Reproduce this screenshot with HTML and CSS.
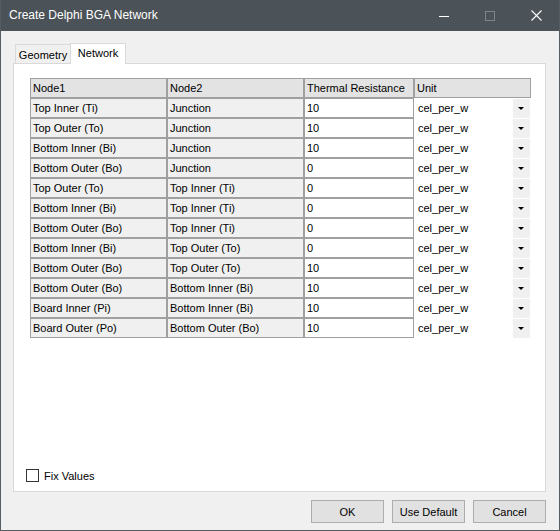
FILE: index.html
```html
<!DOCTYPE html>
<html>
<head>
<meta charset="utf-8">
<link rel="stylesheet" href="styles.css">
</head>
<body>
<div class="window">
  <div class="titlebar">
    <span class="title">Create Delphi BGA Network</span>
    <span class="ctl"><svg width="10" height="10" viewBox="0 0 10 10"><line x1="0" y1="5.5" x2="10" y2="5.5" stroke="#ffffff" stroke-width="1"/></svg></span>
    <span class="ctl"><svg width="10" height="10" viewBox="0 0 10 10"><rect x="0.5" y="0.5" width="9" height="9" fill="none" stroke="#80858a" stroke-width="1"/></svg></span>
    <span class="ctl"><svg width="11" height="11" viewBox="0 0 11 11"><path d="M0.5 0.5 L10.5 10.5 M10.5 0.5 L0.5 10.5" stroke="#ffffff" stroke-width="1.1" fill="none"/></svg></span>
  </div>
  <div class="client">
    <div class="tabs">
      <div class="tab">Geometry</div>
      <div class="tab active">Network</div>
    </div>
    <div class="panel">
      <div class="grid">
        <div class="cell head">Node1</div>
        <div class="cell head">Node2</div>
        <div class="cell head">Thermal Resistance</div>
        <div class="cell head">Unit</div>

        <div class="cell ro">Top Inner (Ti)</div><div class="cell ro">Junction</div><div class="cell ed">10</div><div class="cell combo"><span class="val">cel_per_w</span><span class="drop"><span class="arrow"></span></span></div>
        <div class="cell ro">Top Outer (To)</div><div class="cell ro">Junction</div><div class="cell ed">10</div><div class="cell combo"><span class="val">cel_per_w</span><span class="drop"><span class="arrow"></span></span></div>
        <div class="cell ro">Bottom Inner (Bi)</div><div class="cell ro">Junction</div><div class="cell ed">10</div><div class="cell combo"><span class="val">cel_per_w</span><span class="drop"><span class="arrow"></span></span></div>
        <div class="cell ro">Bottom Outer (Bo)</div><div class="cell ro">Junction</div><div class="cell ed">0</div><div class="cell combo"><span class="val">cel_per_w</span><span class="drop"><span class="arrow"></span></span></div>
        <div class="cell ro">Top Outer (To)</div><div class="cell ro">Top Inner (Ti)</div><div class="cell ed">0</div><div class="cell combo"><span class="val">cel_per_w</span><span class="drop"><span class="arrow"></span></span></div>
        <div class="cell ro">Bottom Inner (Bi)</div><div class="cell ro">Top Inner (Ti)</div><div class="cell ed">0</div><div class="cell combo"><span class="val">cel_per_w</span><span class="drop"><span class="arrow"></span></span></div>
        <div class="cell ro">Bottom Outer (Bo)</div><div class="cell ro">Top Inner (Ti)</div><div class="cell ed">0</div><div class="cell combo"><span class="val">cel_per_w</span><span class="drop"><span class="arrow"></span></span></div>
        <div class="cell ro">Bottom Inner (Bi)</div><div class="cell ro">Top Outer (To)</div><div class="cell ed">0</div><div class="cell combo"><span class="val">cel_per_w</span><span class="drop"><span class="arrow"></span></span></div>
        <div class="cell ro">Bottom Outer (Bo)</div><div class="cell ro">Top Outer (To)</div><div class="cell ed">10</div><div class="cell combo"><span class="val">cel_per_w</span><span class="drop"><span class="arrow"></span></span></div>
        <div class="cell ro">Bottom Outer (Bo)</div><div class="cell ro">Bottom Inner (Bi)</div><div class="cell ed">10</div><div class="cell combo"><span class="val">cel_per_w</span><span class="drop"><span class="arrow"></span></span></div>
        <div class="cell ro">Board Inner (Pi)</div><div class="cell ro">Bottom Inner (Bi)</div><div class="cell ed">10</div><div class="cell combo"><span class="val">cel_per_w</span><span class="drop"><span class="arrow"></span></span></div>
        <div class="cell ro">Board Outer (Po)</div><div class="cell ro">Bottom Outer (Bo)</div><div class="cell ed">10</div><div class="cell combo"><span class="val">cel_per_w</span><span class="drop"><span class="arrow"></span></span></div>
      </div>
      <label class="check"><span class="box"></span><span>Fix Values</span></label>
    </div>
    <div class="buttons">
      <div class="btn">OK</div>
      <div class="btn">Use Default</div>
      <div class="btn">Cancel</div>
    </div>
  </div>
</div>
</body>
</html>
```
FILE: styles.css
```css
html, body {
  margin: 0;
  padding: 0;
  background: #f0f0f0;
}
body {
  font-family: "Liberation Sans", Arial, sans-serif;
  font-size: 11px;
  color: #000;
}
.window {
  width: 560px;
  height: 531px;
  box-sizing: border-box;
  border: 1px solid #555c62;
  border-top: none;
  background: #f0f0f0;
  display: flex;
  flex-direction: column;
}
.titlebar {
  height: 31px;
  background: #4b5258;
  display: flex;
  align-items: center;
  color: #ffffff;
}
.title {
  flex: 1;
  padding-left: 8px;
  font-size: 12px;
  padding-bottom: 1px;
}
.ctl {
  width: 46px;
  height: 31px;
  display: flex;
  align-items: center;
  justify-content: center;
}
.ctl svg {
  display: block;
}
.client {
  flex: 1;
  display: flex;
  flex-direction: column;
}
.tabs {
  display: flex;
  align-items: flex-start;
  height: 21px;
  margin: 12px 0 -1px 14px;
  position: relative;
  z-index: 1;
}
.tab {
  box-sizing: border-box;
  width: 56px;
  height: 19px;
  margin-top: 1px;
  border: 1px solid #d9d9d9;
  border-bottom: none;
  background: #f0f0f0;
  text-align: center;
  padding-top: 3px;
  line-height: 14px;
}
.tab.active {
  height: 21px;
  margin-top: 0;
  margin-left: -1px;
  background: #ffffff;
  padding-top: 2px;
}
.panel {
  box-sizing: border-box;
  width: 533px;
  height: 429px;
  margin-left: 12px;
  border: 1px solid #d9d9d9;
  background: #ffffff;
  padding: 14px 0 0 12px;
  display: flex;
  flex-direction: column;
}
.grid {
  display: grid;
  grid-template-columns: 137px 137px 110px 117px;
  grid-auto-rows: 20px;
  margin-left: 4px;
  width: 501px;
}
.cell {
  box-sizing: border-box;
  height: 20px;
  border: 1px solid #a0a0a0;
  padding-left: 2px;
  line-height: 18px;
  white-space: nowrap;
  overflow: hidden;
}
.head {
  background: #e3e3e3;
}
.ro {
  background: #f0f0f0;
}
.ed {
  background: #ffffff;
}
.combo {
  border-color: transparent;
  background: #ffffff;
  padding-left: 3px;
  display: flex;
  overflow: visible;
}
.val {
  flex: 1;
}
.drop {
  width: 17px;
  height: 19px;
  background: #f0f0f0;
  display: flex;
  align-items: center;
  justify-content: center;
  position: relative;
  z-index: 1;
}
.arrow {
  width: 0;
  height: 0;
  border-left: 3px solid transparent;
  border-right: 3px solid transparent;
  border-top: 3px solid #000;
  margin-left: -1px;
}
.check {
  margin-top: auto;
  margin-bottom: 9px;
  display: flex;
  align-items: center;
  gap: 5px;
  height: 13px;
}
.box {
  box-sizing: border-box;
  width: 13px;
  height: 13px;
  border: 1px solid #333333;
  background: #ffffff;
}
.buttons {
  display: flex;
  justify-content: flex-end;
  gap: 8px;
  margin-top: 8px;
  padding-right: 13px;
}
.btn {
  box-sizing: border-box;
  width: 73px;
  height: 23px;
  border: 1px solid #adadad;
  background: #e1e1e1;
  display: flex;
  align-items: center;
  justify-content: center;
}
```
